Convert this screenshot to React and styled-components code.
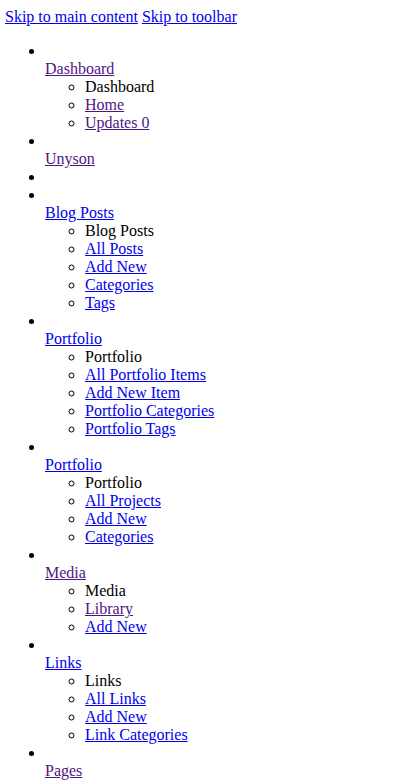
import React from "react";
import styled, { createGlobalStyle } from "styled-components";

const GlobalStyle = createGlobalStyle`
  html, body { background: #ffffff; }
  body {
    margin: 8px 8px 8px 5px;
    font-family: "Liberation Serif", "Times New Roman", serif;
    font-size: 16px;
    line-height: 18px;
    color: #000000;
  }
`;

const SkipBar = styled.div`
  display: block;
`;

const Link = styled.a`
  color: ${(p) => (p.$visited ? "#4f1584" : "#0000ee")};
  text-decoration: underline;
  cursor: pointer;
`;

const Menu = styled.ul`
  list-style: disc outside;
  margin: 16px 0;
  padding-left: 40px;
`;

const MenuItem = styled.li`
  display: list-item;
`;

const MarkerLine = styled.div`
  display: block;
  height: 18px;
`;

const MenuName = styled.div`
  display: block;
`;

const SubMenu = styled.ul`
  list-style: circle outside;
  margin: 0;
  padding-left: 40px;
`;

const SubItem = styled.li`
  display: list-item;
`;

const menu = [
  {
    name: "Dashboard",
    visited: true,
    sub: [
      { label: "Home", visited: true },
      { label: "Updates 0", visited: true },
    ],
  },
  { name: "Unyson", visited: true },
  { separator: true },
  {
    name: "Blog Posts",
    sub: [
      { label: "All Posts" },
      { label: "Add New" },
      { label: "Categories" },
      { label: "Tags" },
    ],
  },
  {
    name: "Portfolio",
    sub: [
      { label: "All Portfolio Items" },
      { label: "Add New Item" },
      { label: "Portfolio Categories" },
      { label: "Portfolio Tags" },
    ],
  },
  {
    name: "Portfolio",
    sub: [
      { label: "All Projects" },
      { label: "Add New" },
      { label: "Categories" },
    ],
  },
  {
    name: "Media",
    visited: true,
    sub: [
      { label: "Library", visited: true },
      { label: "Add New" },
    ],
  },
  {
    name: "Links",
    sub: [
      { label: "All Links" },
      { label: "Add New" },
      { label: "Link Categories" },
    ],
  },
  { name: "Pages", visited: true },
];

export default function App() {
  return (
    <>
      <GlobalStyle />
      <SkipBar>
        <Link href="#wpbody-content">Skip to main content</Link>{" "}
        <Link href="#wp-toolbar">Skip to toolbar</Link>
      </SkipBar>
      <Menu>
        {menu.map((item, i) => (
          <MenuItem key={i}>
            <MarkerLine>{"\u00A0"}</MarkerLine>
            {!item.separator && (
              <>
                <MenuName>
                  <Link href="#" $visited={item.visited}>
                    {item.name}
                  </Link>
                </MenuName>
                {item.sub && (
                  <SubMenu>
                    <SubItem>{item.name}</SubItem>
                    {item.sub.map((s, j) => (
                      <SubItem key={j}>
                        <Link href="#" $visited={s.visited}>
                          {s.label}
                        </Link>
                      </SubItem>
                    ))}
                  </SubMenu>
                )}
              </>
            )}
          </MenuItem>
        ))}
      </Menu>
    </>
  );
}
